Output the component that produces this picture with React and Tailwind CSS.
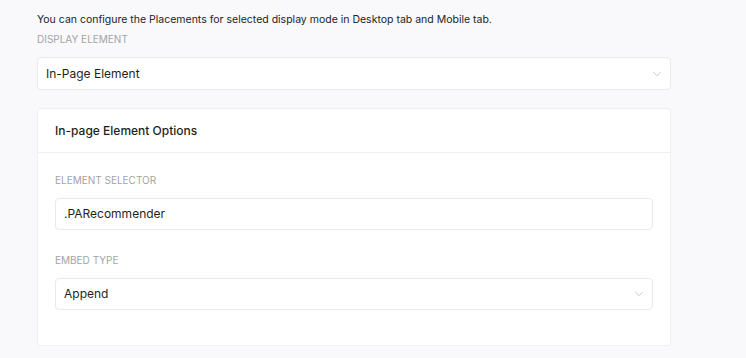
import { ChevronDown } from 'lucide-react';

function Label({ children, className = '' }) {
  return (
    <div className={`text-[10px] leading-4 uppercase text-[#a3a3a6] ${className}`}>
      {children}
    </div>
  );
}

function Field({ value, select, h = 'h-[33px]' }) {
  return (
    <div className={`${h} flex items-center justify-between bg-white border border-[#e9e9ec] rounded-[4px] pl-[8px] pr-[6px]`}>
      <span className="text-[12px] text-[#1f1f22]">{value}</span>
      {select && <ChevronDown className="w-[14px] h-[14px] text-[#b8b8bc]" strokeWidth={1.25} />}
    </div>
  );
}

export default function App() {
  return (
    <div
      className="w-[746px] h-[358px] bg-[#f9f9fb] pt-[12px] pl-[37px] pr-[75px] overflow-hidden"
      style={{ fontFamily: 'Inter, "Noto Sans", sans-serif' }}
    >
      <p className="text-[10.5px] leading-4 text-[#222225]">
        You can configure the Placements for selected display mode in Desktop tab and Mobile tab.
      </p>
      <Label className="mt-[3px]">Display Element</Label>
      <div className="mt-[10px]">
        <Field value="In-Page Element" select />
      </div>

      {/* Options card */}
      <div className="mt-[18px] bg-white border border-[#f0f0f2] rounded-[4px]">
        <div className="h-[44px] flex items-center px-[17px] border-b border-[#f0f0f2]">
          <span className="text-[12px] font-medium text-[#1f1f22]">In-page Element Options</span>
        </div>
        <div className="px-[17px] pt-[19px] pb-[35px]">
          <Label>Element Selector</Label>
          <div className="mt-[10px]">
            <Field value=".PARecommender" h="h-[32px]" />
          </div>
          <Label className="mt-[22px]">Embed Type</Label>
          <div className="mt-[10px]">
            <Field value="Append" select h="h-[32px]" />
          </div>
        </div>
      </div>
    </div>
  );
}
